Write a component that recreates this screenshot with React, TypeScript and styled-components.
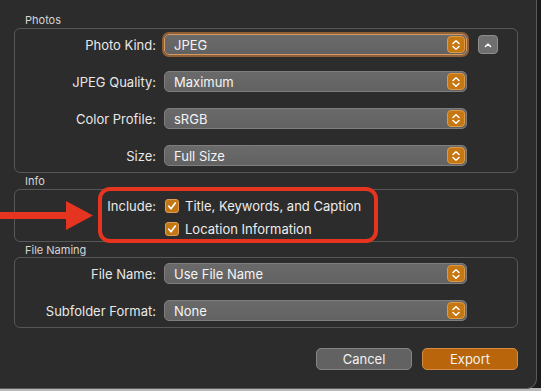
import { FC } from 'react';
import styled, { createGlobalStyle } from 'styled-components';

const GlobalStyle = createGlobalStyle`
  html, body {
    margin: 0;
    padding: 0;
    background: linear-gradient(to bottom, #1c1a1a calc(100% - 3px), #b9b9b9 0);
    height: 391px;
    overflow: hidden;
  }
  body {
    font-family: Inter, "Liberation Sans", sans-serif;
    -webkit-font-smoothing: antialiased;
  }
`;

const Chevrons: FC = () => (
  <svg width='10' height='12' viewBox='0 0 10 12'>
    <path d='M2 4.5 L5 1.8 L8 4.5 M2 7.5 L5 10.2 L8 7.5' fill='none' stroke='#fff' strokeWidth='1.5' strokeLinecap='round' strokeLinejoin='round' />
  </svg>
);

const Check: FC = () => (
  <svg width='10' height='10' viewBox='0 0 10 10'>
    <path d='M1.8 5.2 L4 7.8 L8.3 2' fill='none' stroke='#fff' strokeWidth='1.7' strokeLinecap='round' strokeLinejoin='round' />
  </svg>
);

interface PopupProps {
  value: string;
  focused?: boolean;
}

const Popup: FC<PopupProps> = ({ value, focused }) => (
  <PopupBox $focused={ focused }>
    <span>{ value }</span>
    <Stepper><Chevrons /></Stepper>
  </PopupBox>
);

interface FieldRowProps {
  label: string;
  value: string;
  focused?: boolean;
  extra?: boolean;
}

const FieldRow: FC<FieldRowProps> = ({ label, value, focused, extra }) => (
  <Row>
    <Label>{ label }</Label>
    <Popup value={ value } focused={ focused } />
    { extra &&
      <SmallButton>
        <svg width='8' height='6' viewBox='0 0 8 6'>
          <path d='M1.5 4.5 L4 2 L6.5 4.5' fill='none' stroke='#fff' strokeWidth='1.5' strokeLinecap='round' strokeLinejoin='round' />
        </svg>
      </SmallButton>
    }
  </Row>
);

const CheckRow: FC<{ label?: string; text: string }> = ({ label, text }) => (
  <Row>
    <Label>{ label }</Label>
    <Checkbox><Check /></Checkbox>
    <CheckText>{ text }</CheckText>
  </Row>
);

const App: FC = () => (
  <>
    <GlobalStyle />
    <Dialog>
      <SectionTitle>Photos</SectionTitle>
      <Group>
        <FieldRow label='Photo Kind:' value='JPEG' focused extra />
        <FieldRow label='JPEG Quality:' value='Maximum' />
        <FieldRow label='Color Profile:' value='sRGB' />
        <FieldRow label='Size:' value='Full Size' />
      </Group>

      <SectionTitle>Info</SectionTitle>
      <InfoGroup>
        <CheckRow label='Include:' text='Title, Keywords, and Caption' />
        <CheckRow text='Location Information' />
        <Highlight />
        <Arrow width='94' height='30' viewBox='0 0 94 30'>
          <rect x='0' y='12' width='70' height='7' fill='#e5341f' />
          <path d='M66 1 L93 15.5 L66 30 Z' fill='#e5341f' />
        </Arrow>
      </InfoGroup>

      <SectionTitle $short>File Naming</SectionTitle>
      <Group>
        <FieldRow label='File Name:' value='Use File Name' />
        <FieldRow label='Subfolder Format:' value='None' />
      </Group>

      <Footer>
        <ActionButton>Cancel</ActionButton>
        <ActionButton $primary>Export</ActionButton>
      </Footer>
    </Dialog>
  </>
);

const Dialog = styled.div`
  box-sizing: border-box;
  width: 537px;
  height: 389px;
  background: #2c2c2c;
  border-right: 1px solid #5a5a5a;
  border-bottom: 1px solid #5a5a5a;
  border-bottom-right-radius: 10px;
  padding: 12px 18px 0 14px;
  color: #e4e4e4;
`;

const SectionTitle = styled.div<{ $short?: boolean }>`
  height: ${ props => props.$short ? 15 : 16 }px;
  line-height: 16px;
  padding-left: 11px;
  font-size: 11px;
  color: #d6d6d6;
`;

const Group = styled.div`
  display: flex;
  flex-direction: column;
  gap: 16px;
  border: 1px solid #575757;
  border-radius: 6px;
  padding: 5px 0 6px;
`;

const InfoGroup = styled(Group)`
  position: relative;
  gap: 2px;
  padding: 5px 0 2px;
`;

const Row = styled.div`
  display: flex;
  align-items: center;
  height: 21px;
  font-size: 13px;
`;

const Label = styled.div`
  width: 141px;
  margin-right: 8px;
  text-align: right;
  color: #e8e8e8;
`;

const PopupBox = styled.div<{ $focused?: boolean }>`
  box-sizing: border-box;
  width: 303px;
  height: 21px;
  display: flex;
  align-items: center;
  justify-content: space-between;
  padding: 0 1px 0 9px;
  border-radius: 5px;
  background: linear-gradient(to bottom, #6a6a6a, #626262);
  border: 1px solid #7e7e7e;
  color: #f4f4f4;
  ${ props => props.$focused && `
    border-color: #d49a62;
    box-shadow: 0 0 0 2px rgba(176, 112, 60, 0.75);
  ` }
`;

const Stepper = styled.div`
  box-sizing: border-box;
  width: 18px;
  height: 17px;
  display: flex;
  align-items: center;
  justify-content: center;
  border-radius: 4px;
  background: #c57712;
  border: 1px solid #dc9a48;
`;

const SmallButton = styled.div`
  box-sizing: border-box;
  width: 20px;
  height: 19px;
  margin-left: 11px;
  display: flex;
  align-items: center;
  justify-content: center;
  border-radius: 4px;
  background: #6f6f6f;
  border: 1px solid #8e8e8e;
`;

const Checkbox = styled.div`
  box-sizing: border-box;
  width: 14px;
  height: 14px;
  margin-left: 1px;
  display: flex;
  align-items: center;
  justify-content: center;
  border-radius: 3px;
  background: #c27714;
  border: 1px solid #dc9c55;
`;

const CheckText = styled.span`
  margin-left: 6px;
  color: #ececec;
`;

const Highlight = styled.div`
  position: absolute;
  left: 83px;
  top: -3px;
  width: 280px;
  height: 56px;
  box-sizing: border-box;
  border: 4px solid #e5341f;
  border-radius: 12px;
`;

const Arrow = styled.svg`
  position: absolute;
  left: -15px;
  top: 10px;
`;

const Footer = styled.div`
  display: flex;
  justify-content: flex-end;
  gap: 10px;
  margin-top: 20px;
`;

const ActionButton = styled.div<{ $primary?: boolean }>`
  box-sizing: border-box;
  width: 96px;
  height: 22px;
  display: flex;
  align-items: center;
  justify-content: center;
  border-radius: 5px;
  font-size: 13px;
  color: #f2f2f2;
  background: ${ props => props.$primary ? '#b8650b' : '#626262' };
  border: 1px solid ${ props => props.$primary ? '#d48c45' : '#858585' };
`;

export default App;
